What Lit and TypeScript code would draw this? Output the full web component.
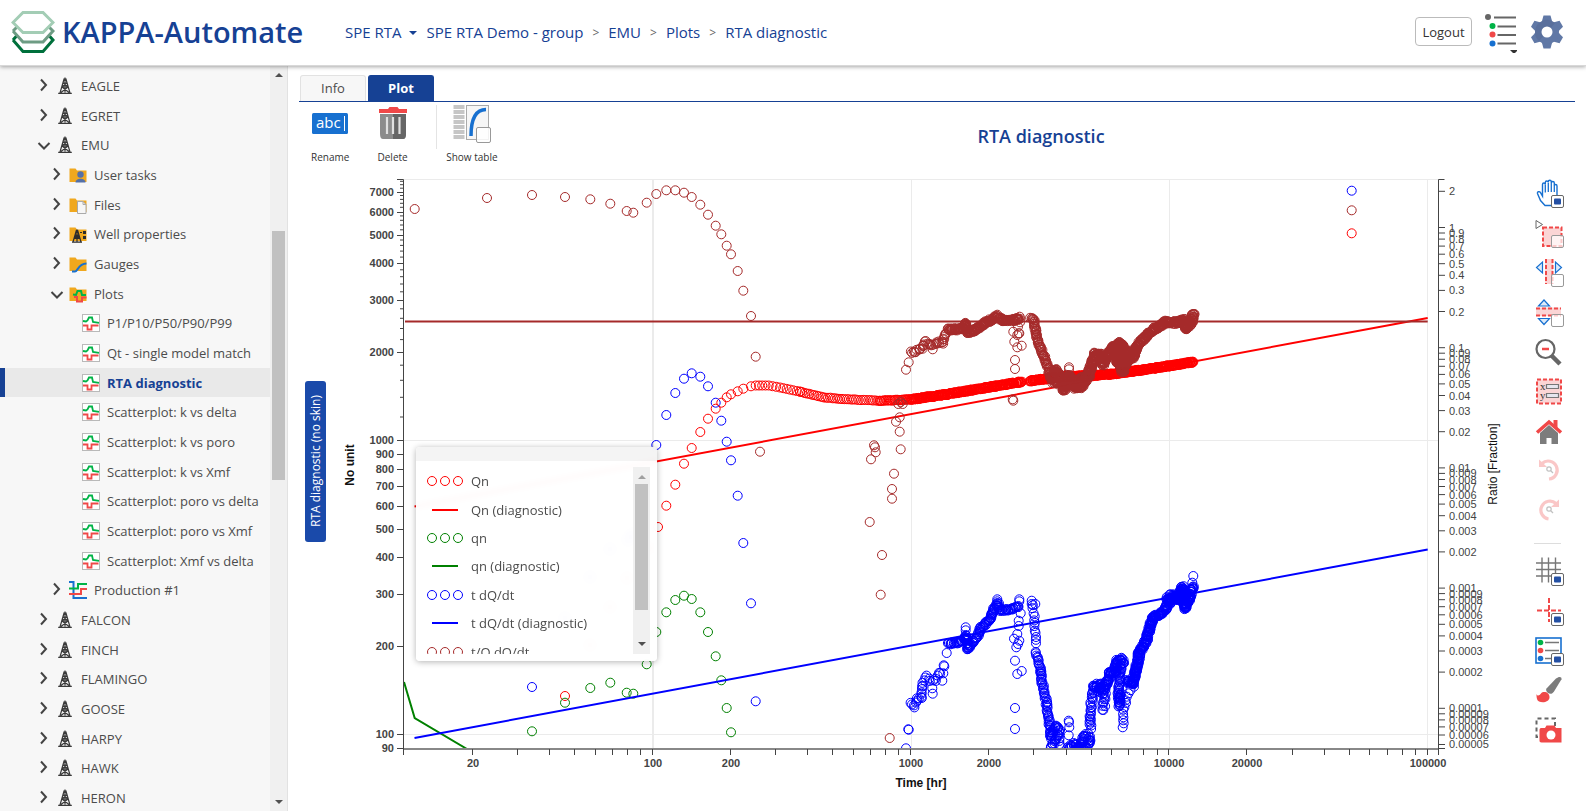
import { LitElement, html, svg, css } from "lit";
import { customElement, state } from "lit/decorators.js";
import { classMap } from "lit/directives/class-map.js";

type Pt = [number, number];

/* ---------- tree data ---------- */
interface Node {
  label: string;
  level: number;
  icon: string;
  open?: boolean;
}
const NODES: Node[] = [
  { label: "EAGLE", level: 0, icon: "well" },
  { label: "EGRET", level: 0, icon: "well" },
  { label: "EMU", level: 0, icon: "well", open: true },
  { label: "User tasks", level: 1, icon: "user" },
  { label: "Files", level: 1, icon: "files" },
  { label: "Well properties", level: 1, icon: "props" },
  { label: "Gauges", level: 1, icon: "gauges" },
  { label: "Plots", level: 1, icon: "plots", open: true },
  { label: "P1/P10/P50/P90/P99", level: 2, icon: "plot" },
  { label: "Qt - single model match", level: 2, icon: "plot" },
  { label: "RTA diagnostic", level: 2, icon: "plot" },
  { label: "Scatterplot: k vs delta", level: 2, icon: "plot" },
  { label: "Scatterplot: k vs poro", level: 2, icon: "plot" },
  { label: "Scatterplot: k vs Xmf", level: 2, icon: "plot" },
  { label: "Scatterplot: poro vs delta", level: 2, icon: "plot" },
  { label: "Scatterplot: poro vs Xmf", level: 2, icon: "plot" },
  { label: "Scatterplot: Xmf vs delta", level: 2, icon: "plot" },
  { label: "Production #1", level: 1, icon: "production" },
  { label: "FALCON", level: 0, icon: "well" },
  { label: "FINCH", level: 0, icon: "well" },
  { label: "FLAMINGO", level: 0, icon: "well" },
  { label: "GOOSE", level: 0, icon: "well" },
  { label: "HARPY", level: 0, icon: "well" },
  { label: "HAWK", level: 0, icon: "well" },
  { label: "HERON", level: 0, icon: "well" },
];

const folder = svg`<path d="M0.5 2.500h6l1.500 2h9.500v11.500h-17z" fill="#f0a81e"/>`;
const curves = svg`
  <path d="M1 7l3 .5 1.500-1 1.500-3h3l1 4.500 6 .8" fill="none" stroke="#00b347" stroke-width="1.800"/>
  <path d="M1 11.500h4.500v4h4v-4h7" fill="none" stroke="#f04848" stroke-width="1.800"/>`;
const TREE_ICONS: Record<string, unknown> = {
  well: svg`<g fill="none" stroke="#3a3a3a" stroke-width="1.200">
    <path d="M8.200 1.500L4 16M9.800 1.500L14 16M7 6h4M6 10h6M7.200 6l5 4M10.800 6l-5 4M6 10l7 5.500M12 10l-7 5.500M9 0.500v15M2.200 16.300h13.600"/></g>`,
  user: svg`${folder}<circle cx="11.500" cy="8.500" r="3.200" fill="#5470a8"/><path d="M6.500 16.500c0-5 10-5 10 0z" fill="#5470a8"/>`,
  files: svg`${folder}<path d="M8.500 5.500h5.500l3 3v9h-8.500z" fill="#f6f6f6" stroke="#aaa"/><path d="M14 5.500v3h3" fill="none" stroke="#aaa"/>`,
  props: svg`${folder}<g fill="none" stroke="#2d2d2d" stroke-width="1.200"><path d="M7.500 5L4 17M8.500 5L12 17M6 10h4M5 13.500h6M6 10l5 3.500M10 10l-5 3.500M3 17.200h10M8 4.500v12"/></g><path d="M14 6h3v3h-3zM14 11h3v3h-3zM11 7h2v1h-2z" fill="#2d2d2d"/>`,
  gauges: svg`${folder}<path d="M3 16.500h3c3 0 3-8 11.500-8" fill="none" stroke="#1770d0" stroke-width="2.200"/>`,
  plots: svg`${folder}<path d="M4 9.500l3 .5 1.500-4h3.500l1 4h4" fill="none" stroke="#00b347" stroke-width="2"/><path d="M5 12h3v4.500h5v-4h4.500" fill="none" stroke="#f04848" stroke-width="2"/>`,
  plot: svg`<rect x=".5" y=".5" width="17" height="17" fill="#fff" stroke="#b9b9b9"/>${curves}`,
  production: svg`<path d="M0 1h4.500v16h13.500" fill="none" stroke="#1770d0" stroke-width="2"/><path d="M0 7.500h9v-4.500h9" fill="none" stroke="#00b347" stroke-width="2"/><path d="M0 13h12v-5h6" fill="none" stroke="#f04848" stroke-width="2"/>`,
};

/* ---------- chart data ---------- */
const LEFT = 404, RIGHT = 1438.5, TOP = 179.5, BOTTOM = 748.5;
const xOf = (hours: number) => 653 + (Math.log10(hours) - 2) * 258.2;
const yOf = (v: number) => 440.3 - (Math.log10(v) - 3) * 294;
const rOf = (v: number) => 227.5 - Math.log10(v) * 120.2;

/* Late-time clouds are stored at three units per step from a local origin. */
const at = (ox: number, oy: number, pts: Pt[]): Pt[] => pts.map(([x, y]) => [ox + x / 3, oy + y / 3]);

/* Samples a polyline at a regular distance with a small repeatable scatter. */
function trail(pts: Pt[], step: number, spread: number, seed = 7): Pt[] {
  let s = seed;
  const rnd = () => {
    s = (s * 1103515245 + 12345) % 2147483648;
    return s / 2147483648 - 0.5;
  };
  const out: Pt[] = [];
  for (let i = 0; i < pts.length - 1; i++) {
    const [ax, ay] = pts[i], [bx, by] = pts[i + 1];
    const n = Math.max(1, Math.round(Math.hypot(bx - ax, by - ay) / step));
    for (let k = 0; k < n; k++) {
      out.push([ax + ((bx - ax) * k) / n + rnd() * spread, ay + ((by - ay) * k) / n + rnd() * spread]);
    }
  }
  out.push(pts[pts.length - 1]);
  return out;
}

const BROWN: Pt[] = [
  [414.7, 209], [487, 198], [532, 195], [565, 197], [590.3, 199.3], [610.3, 203.7], [626.7, 211], [633.3, 212.7],
  [646.7, 202.7], [656.3, 194], [666.3, 190.3], [675.3, 190.3], [684, 192.7], [691.7, 197], [700.3, 204.7], [708, 214.7],
  [715.7, 225.7], [721.3, 234.3], [726.7, 245.7], [731, 254.3], [737.7, 271], [743.3, 290.7], [751, 316], [755.7, 356.7],
  [760, 451.7], [874, 445.3], [875, 447.3], [875.7, 452.3], [871, 459.3], [900.7, 449.3], [894, 473.7], [892, 489],
  [892, 498.7], [899.7, 431.7], [896, 421.7], [899.7, 417.3], [898.3, 404], [902.7, 404], [900.7, 402], [906, 369.7],
  [908.7, 362.3], [869.7, 522], [882, 555], [880.7, 594.7], [889.7, 738], [1351.7, 210.3],
  ...at(780, 160, [[700, 515], [716, 520], [714, 500], [718, 520], [703, 545], [712, 562], [725, 557], [705, 600], [705, 627],
    [698, 718], [700, 722], [720, 487], [712, 525], [867, 622], [867, 628], [458, 568], [652, 464], [719, 470], [437, 543]]),
  ...trail(at(780, 160, [[392, 576], [420, 570], [437, 548], [460, 556], [475, 545], [488, 550], [497, 520]]), 1.4, 2.5),
  ...trail(at(780, 160, [[503, 508], [545, 508], [557, 492], [563, 518], [590, 508], [615, 490], [650, 470], [665, 480], [700, 480], [720, 476]]), 0.5, 2.5, 3),
  ...trail(at(780, 160, [[750, 475], [763, 480], [768, 520], [775, 550], [790, 585], [805, 625], [815, 660]]), 0.9, 2, 5),
  ...trail(at(780, 160, [[815, 655], [828, 630], [845, 660], [853, 690], [862, 645], [875, 655], [885, 682], [905, 680], [920, 655],
    [932, 620], [945, 580], [965, 585], [970, 612], [985, 580], [1000, 560], [1022, 548], [1028, 560], [1015, 600], [1028, 635],
    [1040, 600], [1060, 590], [1070, 560], [1090, 535], [1120, 508], [1160, 485], [1190, 488], [1210, 478], [1217, 505], [1235, 485], [1240, 463]]), 0.4, 3, 9),
  ...trail(at(780, 160, [[820, 665], [860, 675], [900, 655], [930, 650]]), 0.6, 3, 12),
  ...trail(at(780, 160, [[1010, 560], [1012, 610], [1035, 590], [1050, 575], [1065, 585]]), 0.6, 3, 13),
];

const RED: Pt[] = [
  [565, 696], [590, 645], [610, 607], [627, 578], [646.7, 548], [658, 527], [666.3, 505.7], [675.3, 484.7], [684, 463.7], [691.7, 448],
  [700.3, 432], [708, 418.7], [715.7, 408.7], [721.3, 402.7], [726.7, 397.3], [731, 394.3], [737.7, 391.3], [743.3, 388.7],
  [751, 386.3], [1351.7, 233.3],
  ...trail([[755.7, 385.5], [768.7, 385.5], [780, 387.5], [800, 391.7]], 3.3, 0, 1),
  ...trail([[800, 391.7], [823.3, 397.3], [846.7, 399.3], [880, 400.7]], 2.3, 0.4, 1),
  ...trail([[880, 400.7], [911.3, 399.3]], 1.2, 0.8, 2),
  ...trail([[911.3, 399.3], [946.7, 394.3], [980, 388.7], [1022, 381.7]], 0.5, 1.4, 2),
  ...trail([[1030, 381], [1056.7, 377.3], [1113.3, 374], [1153.3, 368.3], [1193.3, 362]], 0.4, 1.3, 4),
];

const GREEN: Pt[] = [
  [532, 731.3], [565, 702.7], [590.3, 688], [610.3, 682.7], [626.7, 692.7], [633.3, 693.7], [646.7, 664.3], [656.3, 632],
  [666.3, 612.3], [675.3, 600], [684, 595.7], [691.7, 599], [700.3, 612.3], [708, 632], [715.7, 656.3], [721.3, 680.3],
  [726.7, 708], [731, 732.3],
];

const BLUE: Pt[] = [
  [532, 687], [565, 618], [590, 577], [610, 549], [628, 540], [633, 534], [656.3, 445], [666.3, 415], [675.3, 393], [684, 378.7],
  [691.7, 373.3], [700.3, 376.7], [708, 386.3], [715.7, 402.7], [721.3, 420.7], [726.7, 441.7], [731, 460.3], [737.7, 495.7],
  [743.3, 543], [751, 603.3], [755.7, 701.3], [1351.7, 190.7],
  ...at(780, 480, [[378, 805], [385, 748], [386, 749], [500, 519], [458, 641], [457, 625], [487, 602], [491, 556], [493, 559], [557, 442],
    [557, 451], [722, 400], [716, 422], [716, 438], [712, 462], [702, 476], [718, 482], [714, 492], [709, 502], [705, 542], [725, 573],
    [712, 582], [705, 684], [705, 747], [652, 358], [652, 364], [718, 358], [718, 364], [755, 362], [755, 372], [766, 372],
    [866, 722], [867, 727], [868, 742], [866, 766], [1240, 288], [1237, 308], [1028, 742], [1031, 730]]),
  ...trail(at(780, 480, [[390, 668], [402, 680], [412, 655], [423, 655], [430, 608], [440, 588], [450, 602], [465, 600], [475, 580], [490, 580]]), 2.4, 2, 21),
  ...trail(at(780, 480, [[505, 492], [545, 485], [557, 468], [565, 508], [580, 485], [595, 465], [605, 440], [628, 422], [640, 390], [654, 370], [662, 392], [690, 388], [715, 378]]), 0.9, 2.2, 22),
  ...trail(at(780, 480, [[757, 375], [763, 410], [765, 440], [768, 470], [768, 490]]), 4, 1.5, 23),
  ...trail(at(780, 480, [[768, 518], [780, 560], [785, 600], [797, 655], [805, 710], [810, 740], [813, 775], [825, 735], [838, 750], [825, 785], [812, 805]]), 1.4, 2, 24),
  ...trail(at(780, 480, [[835, 765], [842, 800]]), 3, 2, 25),
  ...trail(at(780, 480, [[864, 805], [880, 790], [890, 808], [905, 790], [915, 765], [925, 765], [930, 790], [915, 805], [895, 803]]), 1, 3, 26),
  ...trail(at(780, 480, [[930, 745], [932, 710], [932, 690], [938, 655], [945, 615], [965, 612], [960, 635], [975, 645], [970, 690]]), 1.6, 3, 27),
  ...trail(at(780, 480, [[940, 620], [975, 625], [985, 600], [990, 575], [1005, 580], [1010, 545], [1023, 535], [1030, 550]]), 0.7, 3, 28),
  ...trail(at(780, 480, [[1023, 550], [1020, 590], [1015, 640], [1018, 680], [1024, 640]]), 1.4, 2, 29),
  ...trail(at(780, 480, [[1030, 722], [1032, 690], [1040, 650], [1050, 630], [1062, 620]]), 3.5, 1.5, 30),
  ...trail(at(780, 480, [[1040, 600], [1058, 615], [1065, 580], [1075, 540], [1078, 515], [1100, 480], [1110, 440], [1122, 410], [1148, 400], [1172, 358]]), 0.5, 3, 31),
  ...trail(at(780, 480, [[1172, 345], [1195, 355], [1208, 322], [1215, 385], [1230, 350], [1238, 320]]), 0.5, 3, 32),
  ...trail(at(780, 480, [[1155, 355], [1190, 358], [1225, 340]]), 0.7, 3, 33),
];

const X_LABELS = [20, 100, 200, 1000, 2000, 10000, 20000, 100000];
const X_TICKS = [1, 2, 3, 4].flatMap((e) => [1, 2, 3, 4, 5, 6, 7, 8, 9].map((m) => m * 10 ** e)).filter((v) => v >= 20).concat(100000);
const Y_LABELS = [90, 100, 200, 300, 400, 500, 600, 700, 800, 900, 1000, 2000, 3000, 4000, 5000, 6000, 7000];
const Y_MINOR = Array.from({ length: 34 }, (_, i) => 1000 + i * 200).filter((v) => v % 1000 !== 0);
const R_LABELS = ["2", "1", "0.9", "0.8", "0.7", "0.6", "0.5", "0.4", "0.3", "0.2",
  ...["0.", "0.0", "0.00"].flatMap((p) => [p + "1", ...[9, 8, 7, 6, 5, 4, 3, 2].map((d) => p + "0" + d)]),
  "0.0001", "0.00009", "0.00008", "0.00007", "0.00006", "0.00005"];

/* ---------- chart ---------- */
@customElement("rta-chart")
export class RtaChart extends LitElement {
  static styles = css`
    :host { display: block; min-width: 0; }
    svg { display: block; width: 100%; height: auto; }
    .grid { stroke: #ebebeb; fill: none; }
    .axis { stroke: #444; fill: none; }
    .base { stroke: #888; stroke-width: 2; fill: none; }
    .tick { font: bold 11px "Liberation Sans", Arial, sans-serif; fill: #444; }
    .rtick { font: 11px "Liberation Sans", Arial, sans-serif; fill: #444; }
    .name { font: bold 12px "Liberation Sans", Arial, sans-serif; fill: #111; }
    .rname { font: 12px "Liberation Sans", Arial, sans-serif; fill: #111; }
    .end { text-anchor: end; }
    .mid { text-anchor: middle; }
    .dots { fill: none; stroke-width: 1; }
    .line { fill: none; stroke-width: 2; }
    .red { stroke: #f00; }
    .green { stroke: #008000; }
    .blue { stroke: #00f; }
    .brown { stroke: #a52a2a; }
  `;
  private dots(cls: string, pts: Pt[]) {
    return svg`<g class="dots ${cls}">${pts.map(([x, y]) => svg`<circle cx=${x.toFixed(1)} cy=${y.toFixed(1)} r="4.500"/>`)}</g>`;
  }
  render() {
    return html`<svg viewBox="326 169 1208 642" role="img" aria-label="RTA diagnostic plot">
      <defs><clipPath id="frame"><rect x="404" y="179" width="1034" height="569.500"/></clipPath></defs>
      <g class="grid">
        <path d="M${LEFT} ${TOP}H${RIGHT}M${LEFT} 440.500H${RIGHT}M${LEFT} 734.500H${RIGHT}M911.500 ${TOP}V${BOTTOM}M1169.500 ${TOP}V${BOTTOM}M1427.500 ${TOP}V${BOTTOM}"/>
        <path d="M653 ${TOP}V${BOTTOM}" stroke-width="2"/>
      </g>
      <g clip-path="url(#frame)">
        ${this.dots("red", RED)}
        <path class="line red" d="M414.500 506.500L1427.700 318"/>
        ${this.dots("green", GREEN)}
        <path class="line green" d="M404 682L414.700 718L467 749"/>
        ${this.dots("blue", BLUE)}
        <path class="line blue" d="M414.500 738L1427.700 549.500"/>
        ${this.dots("brown", BROWN)}
        <path class="line brown" d="M405 321.500H1427.700"/>
      </g>
      <path class="base" d="M${LEFT} 749H${RIGHT}"/>
      <g class="axis">
        <path d="M397 ${TOP}H403.500V755M${RIGHT + 6} ${TOP}H${RIGHT}V755"/>
        ${Y_LABELS.map((v) => svg`<path d="M397 ${Math.round(yOf(v)) + 0.5}H404"/>`)}
        ${Y_MINOR.filter((v) => v < 7700).map((v) => svg`<path d="M400 ${yOf(v).toFixed(1)}H404"/>`)}
        ${X_TICKS.map((v) => svg`<path d="M${Math.round(xOf(v)) - 0.5} 749V755"/>`)}
        ${R_LABELS.map((t) => svg`<path d="M1438 ${rOf(+t).toFixed(1)}H1445"/>`)}
        <path d="M1438 748.500H1445"/>
      </g>
      ${Y_LABELS.map((v) => svg`<text class="tick end" x="394" y=${Math.round(yOf(v)) + 4}>${v}</text>`)}
      ${X_LABELS.map((v) => svg`<text class="tick mid" x=${Math.round(xOf(v))} y="767">${v}</text>`)}
      ${R_LABELS.map((t) => svg`<text class="rtick" x="1449" y=${Math.round(rOf(+t)) + 4}>${t}</text>`)}
      <text class="name mid" x="921" y="787">Time [hr]</text>
      <text class="name mid" transform="translate(354 465) rotate(-90)">No unit</text>
      <text class="rname mid" transform="translate(1497 464) rotate(-90)">Ratio [Fraction]</text>
    </svg>`;
  }
}

/* ---------- plot tools ---------- */
const box = (on: boolean) => svg`<rect x="17.500" y="16.500" width="12" height="12" rx="1.500" fill="#fff" fill-opacity=${on ? 1 : 0.7} stroke=${on ? "#666" : "#999"}/>
  ${on ? svg`<rect x="20" y="19.500" width="7" height="6" rx="1" fill="#2450a4"/>` : ""}`;
const TOOLS_TOP: [string, unknown][] = [
  ["Pan", svg`<path d="M11 27.500L6.500 22.500L3.500 15.500c-.5-2 2-2.500 3-.8l2 3.500V6.500c0-2 2.800-2 2.800 0V4.500c0-2 3-2 3 0V3.800c0-2 3-2 3 0V5c0-2 3-2 3 0v3c0-2 2.700-2 2.700 0v10l-3 6v3.500z" transform="translate(0 -1)" fill="#fff" stroke="#1770d0" stroke-width="1.400"/><path d="M11.300 5.500v8M14.300 4v9M17.300 4v9M20.300 7v6" stroke="#1770d0" stroke-width="1.300"/>${box(true)}`],
  ["Select rectangle", svg`<path d="M2 1.500v8l6.500-4z" fill="#fff" stroke="#666"/><rect x="9" y="8.500" width="18.500" height="18.500" fill="#fbd5d5" stroke="#f04848" stroke-width="2" stroke-dasharray="4 2"/>${box(false)}`],
  ["Select horizontal range", svg`<rect x="11" y="1" width="8" height="25" fill="#fbd5d5"/><path d="M12 1v25M18.500 1v25" stroke="#f04848" stroke-width="2" stroke-dasharray="4 2"/><path d="M8.500 4v11L2.500 9.500zM21.500 4v11l6-5.500z" fill="#dceaf9" stroke="#1770d0" stroke-width="1.200"/>${box(false)}`],
  ["Select vertical range", svg`<rect x="2" y="9.500" width="25" height="8.500" fill="#fbd5d5"/><path d="M2 10.500h25M2 17.500h25" stroke="#f04848" stroke-width="2" stroke-dasharray="4 2"/><path d="M4.500 8h11L10 2zM4.500 20.500h11l-5.500 6z" fill="#dceaf9" stroke="#1770d0" stroke-width="1.200"/>${box(false)}`],
  ["Zoom out", svg`<path d="M17 17l9 9" stroke="#666" stroke-width="4.500"/><circle cx="11.500" cy="11" r="9" fill="#fff" stroke="#666" stroke-width="2.200"/><path d="M8 11h7" stroke="#f04848" stroke-width="2.500"/>`],
  ["Axis limits", svg`<rect x="3" y="2.500" width="24" height="24" fill="#fbd5d5" stroke="#f04848" stroke-width="2" stroke-dasharray="4 2"/><text x="6" y="12.500" font-family="Liberation Serif" font-size="11" fill="#333">x</text><text x="6" y="21.500" font-family="Liberation Serif" font-size="11" fill="#333">y</text><path d="M12.500 7.500h12v4h-12zM12.500 16.500h12v4h-12z" fill="#e6e6ee" stroke="#777" stroke-width="1.200"/>`],
  ["Reset view", svg`<path d="M6 16l9-8 9 8v11h-6.500v-6h-5v6H6z" fill="#7c7c7c"/><path d="M19.500 3h4v8h-4z" fill="#f04848"/><path d="M3 15.500L15 5l12 10.500" fill="none" stroke="#f04848" stroke-width="3.500"/>`],
  ["Previous zoom", svg`<g opacity=".3"><path d="M8 7.500a9 9 0 1 1 7 15.500" fill="none" stroke="#f04848" stroke-width="3.200"/><path d="M5 3.500v7.500h8z" fill="#f04848"/></g><g opacity=".4" fill="none" stroke="#666" stroke-width="1.200"><circle cx="15" cy="13" r="2.200"/><path d="M16.500 14.500l2.500 2.500"/></g>`],
  ["Next zoom", svg`<g opacity=".3"><path d="M22 7.500A9 9 0 1 0 14.500 23" fill="none" stroke="#f04848" stroke-width="3.200"/><path d="M25 3.500v7.500h-8z" fill="#f04848"/></g><g opacity=".4" fill="none" stroke="#666" stroke-width="1.200"><circle cx="15" cy="13" r="2.200"/><path d="M16.500 14.500l2.500 2.500"/></g>`],
];
const TOOLS_BOTTOM: [string, unknown][] = [
  ["Grid", svg`<path d="M8 0.500v25M14.500 0.500v25M21.500 0.500v25M2 6h25M2 12.500h25M2 19h25" stroke="#777" stroke-width="1.400"/>${box(true)}`],
  ["Crosshair", svg`<path d="M15 1v24M3 13.500h24" stroke="#f04848" stroke-width="2" stroke-dasharray="5 2"/>${box(true)}`],
  ["Legend", svg`<rect x="2" y="1" width="25" height="25" fill="#fff" stroke="#1770d0" stroke-width="1.600"/><circle cx="6.500" cy="5.500" r="2.800" fill="#00b347"/><circle cx="6.500" cy="13.500" r="2.800" fill="#f04848"/><circle cx="6.500" cy="21.500" r="2.800" fill="#1770d0"/><path d="M11 5.500h14M11 13.500h14M11 21.500h8" stroke="#777" stroke-width="1.400"/>${box(true)}`],
  ["Style", svg`<path d="M12.500 12.500l9.500-10c3-2.500 6-2 5.500.8L20 15.500c-2 3-4 2.500-6 1.500-1.500-1.500-2.500-3-1.500-4.500z" fill="#7c7c7c"/><path d="M2.500 18c1 2.500 3 1.500 4.500-.5 2.500-3 9-1 8.500 4-.5 6-11.500 6-12.500 1.500-.5-2-.5-3.500-.5-5z" fill="#f04848"/>`],
  ["Snapshot", svg`<path d="M21 10V2.500H2.500v18.500h5" fill="none" stroke="#666" stroke-width="2" stroke-dasharray="4 3"/><path d="M5.500 14c0-1.500 1-2 2-2h3.500l1.500-2.500h8l1.500 2.500h5.500v14.500h-20c-1.500 0-2-.8-2-2z" fill="#f04848"/><circle cx="17" cy="19" r="4.500" fill="#fff"/>`],
];

const LEGEND: [string, string, boolean][] = [
  ["Qn", "#f00", true], ["Qn (diagnostic)", "#f00", false],
  ["qn", "#008000", true], ["qn (diagnostic)", "#008000", false],
  ["t dQ/dt", "#00f", true], ["t dQ/dt (diagnostic)", "#00f", false],
  ["t/Q dQ/dt", "#a52a2a", true],
];

@customElement("app-root")
export class AppRoot extends LitElement {
  @state() private selected = "RTA diagnostic";

  static styles = css`
    :host {
      display: flex; flex-direction: column; height: 100vh; overflow: hidden; background: #fff; color: #4c4c4c;
      font: 13px/18px "Open Sans", "Noto Sans", sans-serif;
    }
    * { box-sizing: border-box; }
    button { font: inherit; color: inherit; background: none; border: 0; padding: 0; cursor: pointer; }
    a { color: inherit; text-decoration: none; }
    svg { display: block; flex: none; }

    header { display: flex; align-items: center; flex: none; height: 66px; padding: 0 23px 2px 11px; z-index: 2;
      background: #fff; border-bottom: 1px solid #d8d8d8; box-shadow: 0 1px 4px rgba(0, 0, 0, .35); color: #164194; }
    h1 { margin: 0 0 0 7px; width: 283px; font-size: 29px; line-height: 40px; font-weight: 600; }
    .crumbs { display: flex; align-items: center; flex: 1; font-size: 15px; line-height: 24px; white-space: nowrap; }
    .caret { width: 0; border: 4px solid transparent; border-top-color: #164194; border-bottom: 0; margin: 2px 9px 0 8px; }
    .sep { font-size: 12px; color: #666; margin: 2px 9px 0; }
    .logout { height: 29px; width: 57px; border: 1px solid #bbb; border-radius: 4px; color: #333; margin-right: 13px; }
    .menu { margin-right: 14px; }

    .body { display: flex; flex: 1; min-height: 0; }
    aside { display: flex; flex: none; width: 288px; background: #f7f7f7; border-right: 1px solid #e2e2e2; overflow: hidden; }
    .tree { display: grid; grid-auto-rows: 1fr; flex: 1; height: 747px; margin: 0; padding: 5px 0 0; list-style: none; }
    .tree li { display: flex; align-items: center; padding-left: 36px; white-space: nowrap; }
    .tree .l1 { padding-left: 49px; }
    .tree .l2 { padding-left: 62px; }
    .tree .on { background: #e9e9e9; border-left: 5px solid #164194; padding-left: 57px; color: #164194; font-weight: 700; }
    .chev { width: 16px; height: 16px; margin-right: 4px; }
    .tree a { display: flex; align-items: center; gap: 7px; }
    .bar { display: flex; flex-direction: column; justify-content: space-between; align-items: center; width: 17px; background: #f0f0f0; flex: none; }
    .bar i { width: 0; border: 4px solid transparent; }
    .bar .up { border-top: 0; border-bottom-color: #505050; }
    .bar .down { border-bottom: 0; border-top-color: #505050; }
    .bar .dim { border-bottom-color: #a0a0a0; }
    .side { padding: 7px 0 7px; }
    .thumb { width: 13px; background: #c1c1c1; }
    .side .thumb { height: 34%; margin-top: -166px; }

    main { display: flex; flex-direction: column; flex: 1; min-width: 0; padding: 9px 11px 0; }
    .tabs { display: flex; gap: 2px; padding-left: 1px; border-bottom: 1px solid #164194; flex: none; }
    .tab { width: 66px; height: 26px; padding-bottom: 2px; border: 1px solid #e2e2e2; border-bottom: 0; border-radius: 3px 3px 0 0; background: #f7f7f7; }
    .tab.cur { background: #164194; border-color: #164194; color: #fff; font-weight: 700; }
    .head { display: flex; height: 67px; flex: none; }
    .cmds { display: flex; width: 208px; flex: none; }
    .cmd { display: flex; flex-direction: column; align-items: center; justify-content: space-between; height: 62px; width: 64px; font-size: 10px; line-height: 14px; padding-top: 3px; color: #333; }
    .cmd.wide { width: 72px; }
    .rule { width: 1px; height: 44px; margin: 3px 0 0 12px; background: #e4e4e4; }
    h2 { flex: 1; margin: 0; text-align: center; font-size: 18px; line-height: 24px; font-weight: 600; color: #164194; padding-top: 22px; }
    .stage { display: flex; flex: 1; min-height: 0; position: relative; }
    .axis-tag { align-self: flex-start; margin: 212px 0 0 6px; width: 21px; height: 161px; border-radius: 3px; background: #1a4aaa; color: #fff;
      writing-mode: vertical-rl; transform: rotate(180deg); font-size: 12px; line-height: 21px; text-align: center; white-space: nowrap; }
    rta-chart { flex: 1; }
    .tools { display: flex; flex-direction: column; width: 41px; padding-top: 10px; flex: none; }
    .group { display: flex; flex-direction: column; justify-content: space-between; width: 32px; }
    .g9 { height: 349px; }
    .g5 { height: 191px; }
    .tools hr { width: 27px; margin: 15px 0 13px; border: 0; border-top: 1px solid #ddd; }

    .legend { position: absolute; left: 117px; top: 278px; width: 241px; height: 214px; border-radius: 4px; overflow: hidden;
      background: rgba(255, 255, 255, .95); backdrop-filter: blur(3px); }
    .shade { position: absolute; left: 117px; top: 278px; width: 241px; height: 214px; border-radius: 4px; box-shadow: 0 1px 6px rgba(0, 0, 0, .3); }
    .grip { height: 14px; background: rgba(0, 0, 0, .045); }
    .view { display: flex; height: 187px; margin: 6px 7px 0 0; overflow: hidden; }
    .keys { display: grid; grid-auto-rows: 1fr; flex: 1; height: 199px; margin: 0; padding: 0 0 0 11px; list-style: none; }
    .keys li { display: flex; align-items: center; gap: 6px; }
    .view .bar { padding: 8px 0; }
    .view .thumb { height: 126px; margin-top: -27px; }
  `;

  private tree() {
    return NODES.map((n) => {
      const on = n.label === this.selected;
      return html`<li class=${classMap({ l1: n.level === 1, l2: n.level === 2, on })}>
        ${n.level < 2
          ? html`<button class="chev" aria-label=${n.open ? "Collapse " + n.label : "Expand " + n.label} aria-expanded=${n.open ? "true" : "false"}>
              <svg width="16" height="16" fill="none" stroke="#444" stroke-width="2"><path d=${n.open ? "M2.500 6l5.500 5.500L13.500 6" : "M5 1.500l5 5.500-5 5.500"} /></svg>
            </button>`
          : html`<span class="chev"></span>`}
        <a href="#" @click=${(e: Event) => { e.preventDefault(); if (n.level === 2) this.selected = n.label; }}>
          <svg width="18" height="18">${TREE_ICONS[n.icon]}</svg>${n.label}</a>
      </li>`;
    });
  }

  private tools(list: [string, unknown][]) {
    return list.map(([name, art]) => html`<button aria-label=${name} title=${name}><svg width="32" height="32">${art}</svg></button>`);
  }

  render() {
    return html`
      <header>
        <svg width="44" height="42" fill="none" stroke-width="3" viewBox="0 0 44 42">
          <path d="M2 29l10 11.500h20L42 29l-4-4.500M2 29l4-4.500" stroke="#00703c" />
          <path d="M2 20l10 11h20l10-11-4-4M2 20l4-4" stroke="#6e9c84" />
          <path d="M12 1.500h20l10 10L32 21.500H12L2 11.500z" stroke="#a3cdb5" fill="#fff" />
        </svg>
        <h1>KAPPA-Automate</h1>
        <nav class="crumbs" aria-label="Breadcrumb">
          <a href="#">SPE RTA</a><span class="caret"></span><a href="#">SPE RTA Demo - group</a><span class="sep">&gt;</span>
          <a href="#">EMU</a><span class="sep">&gt;</span><a href="#">Plots</a><span class="sep">&gt;</span><a href="#">RTA diagnostic</a>
        </nav>
        <button class="logout">Logout</button>
        <button class="menu" aria-label="Task list"><svg width="32" height="42">
          <circle cx="3" cy="6" r="3" fill="#666" /><circle cx="7.500" cy="15" r="3" fill="#00b347" /><circle cx="7.500" cy="23.500" r="3" fill="#f04848" /><circle cx="7.500" cy="32.500" r="3" fill="#1770d0" />
          <path d="M9 6.500h22M12.500 15.500h18.500M12.500 24h18.500M12.500 32.500h18.500" stroke="#666" stroke-width="2.200" /><path d="M25 39h8l-4 4z" fill="#333" /></svg></button>
        <button aria-label="Settings"><svg width="32" height="34" viewBox="-16 -17 32 34">
          <g fill="#6078a6">${[0, 60, 120].map((a) => svg`<path d="M-5-11L-3.500-16.500h7L5-11V11L3.500 16.500h-7L-5 11z" transform="rotate(${a})"/>`)}<circle r="12" /></g>
          <path d="M-12 0A12 12 0 0 1 8-9L-8 9A12 12 0 0 1-12 0z" fill="#5468938c" /><circle r="5.500" fill="#fff" /></svg></button>
      </header>
      <div class="body">
        <aside>
          <ul class="tree">${this.tree()}</ul>
          <div class="bar side" aria-hidden="true"><i class="up"></i><div class="thumb"></div><i class="down"></i></div>
        </aside>
        <main>
          <div class="tabs" role="tablist">
            <button class="tab" role="tab" aria-selected="false">Info</button>
            <button class="tab cur" role="tab" aria-selected="true">Plot</button>
          </div>
          <div class="head">
            <div class="cmds">
              <button class="cmd"><svg width="36" height="36"><rect y="8" width="36" height="21" rx="1.500" fill="#1770d0" />
                <text x="4" y="23" font-size="15" fill="#fff">abc</text><path d="M32.500 11v15" stroke="#fff" /></svg>Rename</button>
              <button class="cmd"><svg width="28" height="36"><path d="M1 9h26v20c0 3-1 5-3 5H4c-2 0-3-2-3-5z" fill="#8c8c8c" /><path d="M14 9h13v20c0 3-1 5-3 5H14z" fill="#666" />
                <path d="M0 4h9l1.500-2h8L20 4h8v4H0z" fill="#f04848" /><path d="M8 12v17M14 12v17M20.500 12v17" stroke="#e0e0e0" stroke-width="2.200" /></svg>Delete</button>
              <span class="rule"></span>
              <button class="cmd wide"><svg width="38" height="38"><path d="M6 0v35" stroke="#c6c6c6" stroke-width="11" stroke-dasharray="4 1" />
                <rect x="13.500" y=".5" width="22" height="34" fill="#f6f6f6" stroke="#aaa" /><path d="M18 31C18 14 22 4.500 33 4.500" fill="none" stroke="#1770d0" stroke-width="3.500" />
                <rect x="23.500" y="22.500" width="14" height="15" rx="1.500" fill="#fff" fill-opacity=".85" stroke="#999" /></svg>Show table</button>
            </div>
            <h2>RTA diagnostic</h2>
          </div>
          <div class="stage">
            <button class="axis-tag">RTA diagnostic (no skin)</button>
            <rta-chart></rta-chart>
            <div class="tools">
              <div class="group g9">${this.tools(TOOLS_TOP)}</div>
              <hr />
              <div class="group g5">${this.tools(TOOLS_BOTTOM)}</div>
            </div>
            <div class="shade"></div>
            <section class="legend" aria-label="Legend">
              <div class="grip"></div>
              <div class="view">
                <ul class="keys">${LEGEND.map(([name, color, marks]) => html`<li>
                  <svg width="38" height="12" fill="none" stroke=${color}>${marks
                    ? svg`<circle cx="5" cy="6" r="4.500"/><circle cx="18" cy="6" r="4.500"/><circle cx="31" cy="6" r="4.500"/>`
                    : svg`<path d="M5 6h26" stroke-width="2"/>`}</svg>${name}</li>`)}</ul>
                <div class="bar" aria-hidden="true"><i class="up dim"></i><div class="thumb"></div><i class="down"></i></div>
              </div>
            </section>
          </div>
        </main>
      </div>`;
  }
}
